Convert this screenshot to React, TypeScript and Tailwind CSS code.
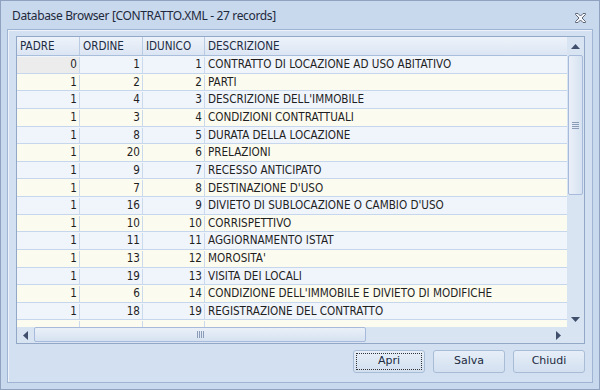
import type { ReactNode } from 'react';

type Row = { padre: string; ordine: string; idunico: string; descr: string };

const rows: Row[] = [
  { padre: '0', ordine: '1', idunico: '1', descr: 'CONTRATTO DI LOCAZIONE AD USO ABITATIVO' },
  { padre: '1', ordine: '2', idunico: '2', descr: 'PARTI' },
  { padre: '1', ordine: '4', idunico: '3', descr: "DESCRIZIONE DELL'IMMOBILE" },
  { padre: '1', ordine: '3', idunico: '4', descr: 'CONDIZIONI CONTRATTUALI' },
  { padre: '1', ordine: '8', idunico: '5', descr: 'DURATA DELLA LOCAZIONE' },
  { padre: '1', ordine: '20', idunico: '6', descr: 'PRELAZIONI' },
  { padre: '1', ordine: '9', idunico: '7', descr: 'RECESSO ANTICIPATO' },
  { padre: '1', ordine: '7', idunico: '8', descr: "DESTINAZIONE D'USO" },
  { padre: '1', ordine: '16', idunico: '9', descr: "DIVIETO DI SUBLOCAZIONE O CAMBIO D'USO" },
  { padre: '1', ordine: '10', idunico: '10', descr: 'CORRISPETTIVO' },
  { padre: '1', ordine: '11', idunico: '11', descr: 'AGGIORNAMENTO ISTAT' },
  { padre: '1', ordine: '13', idunico: '12', descr: "MOROSITA'" },
  { padre: '1', ordine: '19', idunico: '13', descr: 'VISITA DEI LOCALI' },
  { padre: '1', ordine: '6', idunico: '14', descr: "CONDIZIONE DELL'IMMOBILE E DIVIETO DI MODIFICHE" },
  { padre: '1', ordine: '18', idunico: '19', descr: 'REGISTRAZIONE DEL CONTRATTO' },
  { padre: '', ordine: '', idunico: '', descr: '' },
];

const gridFont = "[font-family:'DejaVu_Sans_Condensed','DejaVu_Sans',sans-serif]";

function HeaderCell({ children, w }: { children: ReactNode; w: string }) {
  return (
    <div className={`${w} shrink-0 h-full border-r border-[#b9cbe3] pl-[3px] pt-[2px] flex items-center`}>
      {children}
    </div>
  );
}

function Grip({ vertical }: { vertical?: boolean }) {
  return vertical ? (
    <div className="flex flex-col gap-[1px]">
      <div className="w-[7px] h-[1px] bg-[#8a9cb8]" />
      <div className="w-[7px] h-[1px] bg-[#8a9cb8]" />
      <div className="w-[7px] h-[1px] bg-[#8a9cb8]" />
      <div className="w-[7px] h-[1px] bg-[#8a9cb8]" />
    </div>
  ) : (
    <div className="flex gap-[1px]">
      <div className="h-[7px] w-[1px] bg-[#8a9cb8]" />
      <div className="h-[7px] w-[1px] bg-[#8a9cb8]" />
      <div className="h-[7px] w-[1px] bg-[#8a9cb8]" />
      <div className="h-[7px] w-[1px] bg-[#8a9cb8]" />
    </div>
  );
}

function DialogButton({ label, focused }: { label: string; focused?: boolean }) {
  return (
    <div className="w-[72px] h-[23px] rounded-[3px] border border-[#a9bcd6] bg-gradient-to-b from-[#e6eef8] to-[#d3e0f0] p-[2px]">
      <div
        className={`w-full h-full flex items-center justify-center text-[11px] text-[#1b2a40] ${
          focused ? 'border border-dotted border-[#333]' : ''
        }`}
      >
        {label}
      </div>
    </div>
  );
}

export default function App() {
  return (
    <div className="w-[600px] h-[390px] bg-[#c8d8ed] border border-[#8fa3c0] flex flex-col [font-family:'Noto_Sans',sans-serif] overflow-hidden">
      {/* Title bar */}
      <div className="h-[28px] shrink-0 flex items-center justify-between pl-[11px] pr-[12px]">
        <span className="text-[12px] text-[#1e2a3c] tracking-[-0.35px] mt-[2px]">
          Database Browser [CONTRATTO.XML - 27 records]
        </span>
        <svg width="13" height="12" viewBox="0 0 13 12" className="mt-[5px]">
          <path
            d="M1.5 1.5 L4 1.5 L6.5 4 L9 1.5 L11.5 1.5 L11.5 2.5 L8 6 L11.5 9.5 L11.5 10.5 L9 10.5 L6.5 8 L4 10.5 L1.5 10.5 L1.5 9.5 L5 6 L1.5 2.5 Z"
            fill="#f4f6f9"
            stroke="#5e6675"
            strokeWidth="1"
            strokeLinejoin="round"
          />
        </svg>
      </div>

      {/* Inner frame */}
      <div className="flex-1 mx-[6px] mb-[6px] border border-[#9fb4d2] bg-[#d3e0f1] shadow-[inset_1px_1px_0_#eef3fa] flex flex-col pt-[6px] pl-[8px] pr-[7px]">
        {/* Grid */}
        <div className={`h-[308px] border border-[#93a8c6] bg-[#f0f4fa] flex flex-col ${gridFont} text-[11.6px] text-[#1f1f1f]`}>
          <div className="flex-1 flex min-h-0">
            <div className="flex-1 flex flex-col min-w-0 overflow-hidden">
              {/* Header */}
              <div className="h-[19px] shrink-0 flex border-b border-[#a9bedb] bg-gradient-to-b from-[#eef3fa] to-[#dbe5f3] text-[#1e2c44]">
                <HeaderCell w="w-[63px]">PADRE</HeaderCell>
                <HeaderCell w="w-[63px]">ORDINE</HeaderCell>
                <HeaderCell w="w-[62px]">IDUNICO</HeaderCell>
                <div className="flex-1 pl-[3px] pt-[2px] flex items-center">DESCRIZIONE</div>
              </div>
              {/* Rows */}
              {rows.map((r, i) => (
                <div
                  key={i}
                  className={`h-[17.64px] shrink-0 flex pt-[1px] border-b border-[#c6d6ec] ${
                    i % 2 === 0 ? 'bg-[#f0f4fb]' : 'bg-[#fcfbef]'
                  }`}
                >
                  <div
                    className={`w-[63px] shrink-0 border-r border-[#cbd9ec] pr-[2px] flex items-center justify-end ${
                      i === 0 ? 'bg-[#ececec]' : ''
                    }`}
                  >
                    {r.padre}
                  </div>
                  <div className="w-[63px] shrink-0 border-r border-[#cbd9ec] pr-[2px] flex items-center justify-end">
                    {r.ordine}
                  </div>
                  <div className="w-[62px] shrink-0 border-r border-[#cbd9ec] pr-[2px] flex items-center justify-end">
                    {r.idunico}
                  </div>
                  <div className="flex-1 pl-[3px] flex items-center whitespace-nowrap">{r.descr}</div>
                </div>
              ))}
            </div>

            {/* Vertical scrollbar */}
            <div className="w-[17px] shrink-0 bg-[#d9e4f2] flex flex-col items-center">
              <div className="h-[18px] w-full flex items-center justify-center">
                <svg width="9" height="5" viewBox="0 0 9 5">
                  <path d="M0 5 L4.5 0 L9 5 Z" fill="#3f4f6c" />
                </svg>
              </div>
              <div className="w-[15px] h-[140px] rounded-[2px] border border-[#a7badb] bg-gradient-to-r from-[#eaf0f8] to-[#d6e2f1] flex items-center justify-center">
                <Grip vertical />
              </div>
              <div className="flex-1" />
              <div className="h-[16px] w-full flex items-center justify-center">
                <svg width="9" height="5" viewBox="0 0 9 5">
                  <path d="M0 0 L9 0 L4.5 5 Z" fill="#3f4f6c" />
                </svg>
              </div>
            </div>
          </div>

          {/* Horizontal scrollbar */}
          <div className="h-[16px] shrink-0 flex bg-[#d9e4f2]">
            <div className="w-[17px] h-full flex items-center justify-center">
              <svg width="5" height="9" viewBox="0 0 5 9">
                <path d="M5 0 L0 4.5 L5 9 Z" fill="#3f4f6c" />
              </svg>
            </div>
            <div className="w-[332px] h-[15px] rounded-[2px] border border-[#a7badb] bg-gradient-to-b from-[#eaf0f8] to-[#d6e2f1] flex items-center justify-center">
              <Grip />
            </div>
            <div className="flex-1" />
            <div className="w-[17px] h-full flex items-center justify-center mr-[17px]">
              <svg width="5" height="9" viewBox="0 0 5 9">
                <path d="M0 0 L5 4.5 L0 9 Z" fill="#3f4f6c" />
              </svg>
            </div>
          </div>
        </div>

        {/* Buttons */}
        <div className="flex justify-end gap-[8px] mt-[6px] [font-family:'DejaVu_Sans',sans-serif]">
          <DialogButton label="Apri" focused />
          <DialogButton label="Salva" />
          <DialogButton label="Chiudi" />
        </div>
      </div>
    </div>
  );
}
